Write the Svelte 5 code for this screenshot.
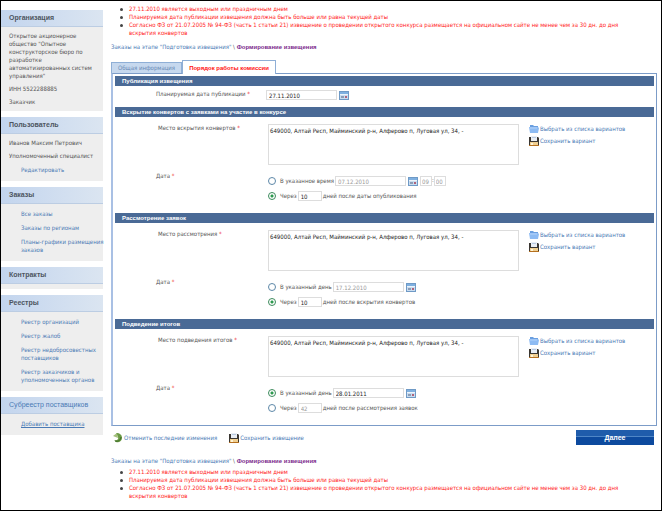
<script>
    const menu = [
        {
            title: 'Организация',
            text: [
                'Открытое акционерное общество "Опытное конструкторское бюро по разработке автоматизированных систем управления"',
                'ИНН 5522288885',
                'Заказчик'
            ]
        },
        {
            title: 'Пользователь',
            text: ['Иванов Максим Петрович', 'Уполномоченный специалист'],
            links: ['Редактировать']
        },
        { title: 'Заказы', links: ['Все заказы', 'Заказы по регионам', 'Планы-графики размещения заказов'] },
        { title: 'Контракты' },
        {
            title: 'Реестры',
            links: [
                'Реестр организаций',
                'Реестр жалоб',
                'Реестр недобросовестных поставщиков',
                'Реестр заказчиков и уполномоченных органов'
            ]
        },
        { title: 'Субреестр поставщиков', sub: true, links: ['Добавить поставщика'] }
    ];

    const warnings = [
        '27.11.2010 является выходным или праздничным днем',
        'Планируемая дата публикации извещения должна быть больше или равна текущей даты',
        'Согласно ФЗ от 21.07.2005 № 94-ФЗ (часть 1 статьи 21) извещение о проведении открытого конкурса размещается на официальном сайте не менее чем за 30 дн. до дня вскрытия конвертов'
    ];

    const address = '649000, Алтай Респ, Майминский р-н, Алферово п, Луговая ул, 34, -';

    let sections = $state([
        {
            id: 'opening',
            title: 'Вскрытие конвертов с заявками на участие в конкурсе',
            place: 'Место вскрытия конвертов',
            address,
            mode: 'days',
            dateLabel: 'В указанное время',
            date: '07.12.2010',
            time: ['09', '00'],
            days: '10',
            after: 'дней после даты опубликования'
        },
        {
            id: 'review',
            title: 'Рассмотрение заявок',
            place: 'Место рассмотрения',
            address,
            mode: 'days',
            dateLabel: 'В указанный день',
            date: '17.12.2010',
            days: '10',
            after: 'дней после вскрытия конвертов'
        },
        {
            id: 'results',
            title: 'Подведение итогов',
            place: 'Место подведения итогов',
            address,
            mode: 'date',
            dateLabel: 'В указанный день',
            date: '28.01.2011',
            days: '42',
            after: 'дней после рассмотрения заявок'
        }
    ]);

    let publishDate = $state('27.11.2010');
</script>

{#snippet calendar()}
    <button type="button" class="calendar" aria-label="Календарь">
        <svg viewBox="0 0 10 9" width="10" height="9">
            <rect x="0.5" y="0.5" width="9" height="8" fill="#c9dcf0" stroke="#6f9ac6" />
            <rect x="1" y="1" width="8" height="2" fill="#7fb0e0" />
            <rect x="1" y="3" width="8" height="1" fill="#eef4fa" />
            <rect x="2" y="5" width="3" height="2" fill="#8b9db6" />
            <rect x="6" y="5" width="2" height="2" fill="#b0637a" />
        </svg>
    </button>
{/snippet}

{#snippet disk()}
    <svg class="icon" viewBox="0 0 10 10" width="10" height="10">
        <path d="M0 1h9l1 1v8H0z" fill="#3b3732" />
        <rect x="2" y="0" width="6" height="5" fill="#e9eef5" />
        <rect x="3" y="1" width="4" height="1" fill="#b9cbe2" />
        <rect x="1" y="6" width="8" height="3" fill="#f0cf91" />
        <rect x="2" y="7" width="2" height="2" fill="#fff4d9" />
        <path d="M0 9h10v1H0z" fill="#b5701f" />
    </svg>
{/snippet}

{#snippet folder()}
    <svg class="icon" viewBox="0 0 10 10" width="10" height="10">
        <path d="M1 1h3l1 1h4v7H1z" fill="#6a9fe0" />
        <path d="M0 3h9l1 1-1 5H1z" fill="#8dbbf3" />
        <path d="M1 4h7" stroke="#b4d3fa" />
    </svg>
{/snippet}

{#snippet breadcrumb()}
    <nav class="breadcrumb">
        <a href="#orders">Заказы на этапе "Подготовка извещения"</a> \ <a class="current" href="#notice">Формирование извещения</a>
    </nav>
{/snippet}

{#snippet warningList()}
    <ul class="warnings">
        {#each warnings as warning}
            <li>{warning}</li>
        {/each}
    </ul>
{/snippet}

<div class="page">
    <aside>
        {#each menu as block}
            <section class="block">
                <h2 class:sub={block.sub}>{block.title}</h2>
                <div class="block-body" class:blank={!block.text && !block.links}>
                    {#each block.text ?? [] as line}
                        <p>{line}</p>
                    {/each}
                    {#if block.links}
                        <ul class="menu-links">
                            {#each block.links as link}
                                <li><a class:underlined={block.sub} href="#menu">{link}</a></li>
                            {/each}
                        </ul>
                    {/if}
                </div>
            </section>
        {/each}
    </aside>

    <main>
        {@render warningList()}
        {@render breadcrumb()}

        <form onsubmit={(e) => e.preventDefault()}>
            <div class="tabs">
                <button type="button" class="tab">Общая информация</button>
                <button type="button" class="tab active">Порядок работы комиссии</button>
            </div>

            <div class="panel">
                <h3>Публикация извещения</h3>
                <div class="row publish">
                    <label class="label" for="publish">Планируемая дата публикации <i>*</i></label>
                    <div class="date-field">
                        <input id="publish" class="date" type="text" bind:value={publishDate} />
                        {@render calendar()}
                    </div>
                </div>

                {#each sections as section (section.id)}
                    <h3>{section.title}</h3>
                    <div class="row place">
                        <label class="label" for="{section.id}-place">{section.place} <i>*</i></label>
                        <textarea id="{section.id}-place" bind:value={section.address}></textarea>
                        <div class="variants">
                            <a href="#choose">{@render folder()}Выбрать из списка вариантов</a>
                            <a href="#save">{@render disk()}Сохранить вариант</a>
                        </div>
                    </div>
                    <div class="row when">
                        <div class="label">Дата <i>*</i></div>
                        <div class="options">
                            <div class="option">
                                <label>
                                    <input type="radio" name="{section.id}-mode" value="date" bind:group={section.mode} />
                                    {section.dateLabel}
                                </label>
                                <input
                                    class="date"
                                    type="text"
                                    aria-label={section.dateLabel}
                                    disabled={section.mode !== 'date'}
                                    bind:value={section.date}
                                />
                                {@render calendar()}
                                {#if section.time}
                                    <span class="time">
                                        <input type="text" aria-label="Часы" disabled={section.mode !== 'date'} bind:value={section.time[0]} />:<input type="text" aria-label="Минуты" disabled={section.mode !== 'date'} bind:value={section.time[1]} />
                                    </span>
                                {/if}
                            </div>
                            <div class="option">
                                <label>
                                    <input type="radio" name="{section.id}-mode" value="days" bind:group={section.mode} />
                                    Через
                                </label>
                                <input
                                    class="days"
                                    type="text"
                                    aria-label={section.after}
                                    disabled={section.mode !== 'days'}
                                    bind:value={section.days}
                                />
                                <span>{section.after}</span>
                            </div>
                        </div>
                    </div>
                {/each}
            </div>

            <div class="actions">
                <a href="#undo">
                    <svg class="icon" viewBox="0 0 10 10" width="10" height="10">
                        <path d="M3 0c4 0 6 2 6 5s-3 5-6 4L1 7c3 1 5-1 4-3z" fill="#6b9a45" />
                        <path d="M0 3l4-3 1 5z" fill="#a3bf7c" />
                        <path d="M2 8c3 1 6-1 6-4" stroke="#3c6b27" fill="none" />
                    </svg>
                    Отменить последние изменения
                </a>
                <a href="#save">{@render disk()}Сохранить извещение</a>
                <button type="submit" class="next">Далее</button>
            </div>
        </form>

        {@render breadcrumb()}
        {@render warningList()}
    </main>
</div>

<style>
    :global(body) {
        background: #fff;
    }

    .page {
        box-sizing: border-box;
        min-height: 100vh;
        display: flex;
        border: 1px solid #000;
        font: 6px/8px "DejaVu Sans Condensed", "Noto Sans", Tahoma, sans-serif;
        color: #555;
    }

    .page * {
        box-sizing: border-box;
    }

    ul,
    p,
    h2,
    h3 {
        margin: 0;
        padding: 0;
        list-style: none;
    }

    a {
        color: #4a7ab5;
        text-decoration: none;
    }

    input,
    textarea,
    button {
        margin: 0;
        font: inherit;
    }

    i {
        color: #e33;
        font-style: normal;
    }

    h2,
    h3,
    .current,
    .tab.active,
    .next {
        font-family: "Liberation Sans", Arial, sans-serif;
        font-weight: bold;
    }

    /* Sidebar */
    aside {
        flex: none;
        width: 102px;
        padding-top: 9px;
    }

    .block {
        margin-bottom: 6px;
        background: #eee;
    }

    h2 {
        padding: 0 8px;
        border-bottom: 1px solid #bccde3;
        background: linear-gradient(to right, #c3d5ee, #dbe5f1);
        font-size: 7px;
        line-height: 16px;
        color: #4d5560;
        white-space: nowrap;
    }

    h2.sub {
        font-weight: normal;
        color: #4a7ab5;
    }

    .block-body {
        display: flex;
        flex-direction: column;
        gap: 5px;
        padding: 5px 0 5px 8px;
    }

    .block-body.blank {
        padding: 5px 0 0;
    }

    .menu-links {
        display: flex;
        flex-direction: column;
        gap: 6px;
        margin-right: -4px;
        padding: 1px 0 2px 12px;
    }

    .underlined {
        text-decoration: underline;
    }

    /* Content */
    main {
        flex: 1;
        min-width: 0;
        padding: 4px 4px 4px 8px;
    }

    .warnings {
        padding-left: 18px;
        color: #f22;
    }

    .warnings li {
        position: relative;
        padding-right: 36px;
    }

    .warnings li::before {
        content: '';
        position: absolute;
        left: -9px;
        top: 3px;
        width: 3px;
        height: 3px;
        border-radius: 50%;
        background: #444;
    }

    .breadcrumb {
        margin: 6px 0 3px;
    }

    .current {
        color: #7b2a8b;
    }

    form {
        margin: 9px 0 12px;
    }

    .tabs {
        display: flex;
        align-items: flex-end;
    }

    .tab {
        height: 11px;
        padding: 0 6px;
        border: 1px solid #8fafd6;
        border-bottom: 0;
        background: #c6d8ee;
        color: #6688b5;
        line-height: 10px;
        white-space: nowrap;
    }

    .tab.active {
        position: relative;
        height: 14px;
        margin-bottom: -1px;
        background: #fff;
        color: #f11;
        line-height: 12px;
    }

    .panel {
        padding: 2px 2px 0;
        border: 1px solid #7c9cc8;
        border-left: 2px solid #a9c0e4;
    }

    h3 {
        padding: 0 7px;
        background: #4a6a96;
        color: #fff;
        font-size: 6px;
        line-height: 10px;
    }

    .row {
        display: grid;
        grid-template-columns: 110px minmax(0, 1fr) 125px;
        padding-left: 43px;
    }

    .publish {
        padding: 4px 0 7px 41px;
    }

    .date-field,
    .option {
        display: flex;
        align-items: center;
    }

    input[type='text'],
    textarea {
        border: 1px solid #ddd;
        border-radius: 0;
        background: #fff;
        color: #222;
    }

    input[type='text'] {
        height: 10px;
        padding: 0 2px;
    }

    input[type='text']:disabled {
        color: #999;
    }

    .date {
        width: 71px;
    }

    .calendar {
        display: flex;
        margin-left: 2px;
        padding: 0;
        border: 0;
        background: none;
    }

    .place {
        padding-top: 7px;
    }

    textarea {
        width: calc(100% - 10px);
        height: 41px;
        padding: 2px 1px;
        resize: none;
        overflow: hidden;
    }

    .variants {
        display: flex;
        flex-direction: column;
        gap: 2px;
    }

    .variants a,
    .actions a {
        display: flex;
        align-items: center;
        gap: 1px;
        white-space: nowrap;
    }

    .icon {
        flex: none;
    }

    .when {
        grid-template-columns: 112px minmax(0, 1fr);
        padding: 7px 0 12px 41px;
    }

    .options {
        display: flex;
        flex-direction: column;
        gap: 5px;
        padding-top: 4px;
    }

    .option label {
        display: flex;
        align-items: center;
        gap: 4px;
    }

    .option input[type='text'] {
        margin-left: 1px;
    }

    input[type='radio'] {
        appearance: none;
        width: 8px;
        height: 8px;
        border: 1px solid #5d88a8;
        border-radius: 50%;
        background: #fff;
    }

    input[type='radio']:checked {
        border-color: #3c8a5c;
        background: radial-gradient(circle, #2c9a4e 1px, #fff 2px);
    }

    .option .days {
        width: 24px;
        margin-right: 1px;
    }

    .time {
        display: flex;
        margin-left: 2px;
    }

    .time input[type='text'] {
        width: 12px;
        margin-left: 0;
        padding: 0 1px;
    }

    .actions {
        display: flex;
        align-items: center;
        gap: 12px;
        padding: 4px 3px 0 2px;
    }

    .next {
        width: 78px;
        height: 15px;
        margin-left: auto;
        padding: 0;
        border: 0;
        background: linear-gradient(#1f5cab 0 42%, #4f86c6 42% 50%, #0d4a9e 50%);
        color: #fff;
        font-size: 7px;
    }
</style>
